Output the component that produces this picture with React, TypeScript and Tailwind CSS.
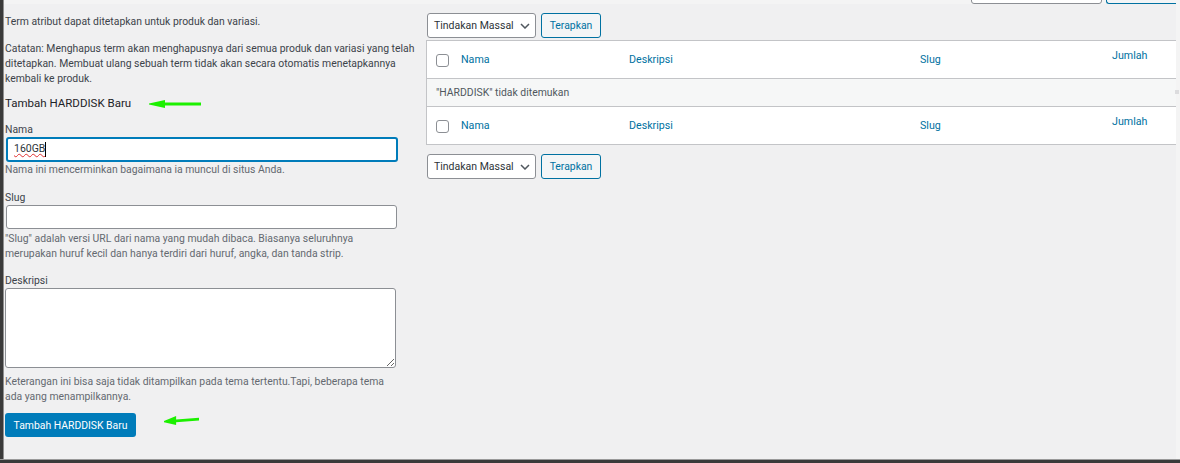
const font = "[font-family:'Roboto','Noto_Sans',sans-serif]";

const Help = ({ children }: { children: React.ReactNode }) => (
  <p className="max-w-[392px] text-[10.4px] leading-[15px] text-[#646970]">{children}</p>
);

const BulkActions = () => (
  <div className="flex items-center gap-[5px]">
    <div className="flex h-[25px] w-[109px] items-center justify-between whitespace-nowrap rounded-[3px] border border-[#8c8f94] bg-white pl-[6px] pr-[5px] text-[10.5px] text-[#2c3338]">
      <span>Tindakan Massal</span>
      <svg width="10" height="6" viewBox="0 0 10 6" fill="none" stroke="#50575e" strokeWidth="1.5">
        <path d="M1 1l4 4 4-4" />
      </svg>
    </div>
    <div className="flex h-[25px] w-[60px] items-center justify-center rounded-[3px] border border-[#0071a1] bg-[#f3f5f6] pt-px text-[10.4px] text-[#0071a1]">
      Terapkan
    </div>
  </div>
);

const HeaderRow = () => (
  <div className="grid h-[37px] grid-cols-[34px_168px_291px_192px_1fr] bg-white pt-[2px] text-[10.7px] text-[#0071a1]">
    <div className="flex items-center pl-[9px]">
      <span className="h-[13px] w-[13px] rounded-[3px] border border-[#8c8f94] bg-white" />
    </div>
    <div className="flex items-center">Nama</div>
    <div className="flex items-center">Deskripsi</div>
    <div className="flex items-center">Slug</div>
    <div className="pt-[5px]">Jumlah</div>
  </div>
);

const Arrow = ({ className, slanted }: { className: string; slanted?: boolean }) => (
  <svg className={className} viewBox="0 0 52 8" preserveAspectRatio="none" fill="#1cf000">
    {slanted ? <path d="M0 4.5V5.5L18 8V5.5L52 4V1.5L18 3V0Z" /> : <path d="M0 3.4V4.6L16 8V5.5H52V2.5H16V0Z" />}
  </svg>
);

export default function App() {
  return (
    <div className={`${font} flex h-[463px] w-[1180px] flex-col overflow-hidden bg-[#f0f0f1]`}>
      <div className="flex min-h-0 flex-1">
        <div className="w-[4px] shrink-0 border-r border-[#8f8f8f] bg-[#3a3a3a]" />
        <div className="min-w-0 flex-1">
          {/* tombol atas yang terpotong */}
          <div className="flex h-[4px] items-end justify-end gap-[4px] overflow-hidden bg-[#f4f4f4]">
            <div className="h-[20px] w-[131px] shrink-0 rounded-[3px] border border-[#8c8f94] bg-white" />
            <div className="h-[20px] w-[70px] shrink-0 rounded-l-[3px] border border-r-0 border-[#0071a1] bg-[#f3f5f6]" />
          </div>

          <div className="flex">
            {/* kolom kiri */}
            <div className="relative w-[415px] shrink-0 pl-[1px] pt-[10px] text-[#3c434a]">
              <p className="text-[10.4px] leading-[15px]">Term atribut dapat ditetapkan untuk produk dan variasi.</p>
              <p className="mt-[12px] text-[10.4px] leading-[15px]">
                Catatan: Menghapus term akan menghapusnya dari semua produk dan variasi yang telah ditetapkan. Membuat ulang sebuah term tidak akan secara otomatis menetapkannya kembali ke produk.
              </p>
              <h2 className="mt-[9px] text-[11.5px] font-normal leading-[16px] text-[#1d2327]">Tambah HARDDISK Baru</h2>
              <Arrow className="absolute left-[145px] top-[96px] h-[8px] w-[52px]" />

              <label className="mt-[11px] block text-[10.4px] leading-[15px]">Nama</label>
              <div className="ml-[1px] flex h-[25px] w-[392px] items-center rounded-[3px] border-2 border-[#007cba] bg-white pb-px pl-[6px] text-[10.5px] text-[#2c3338]">
                <span className="underline decoration-[#e03131] decoration-wavy decoration-[1px]">160GB</span>
                <span className="h-[15px] w-px bg-black" />
              </div>
              <Help>Nama ini mencerminkan bagaimana ia muncul di situs Anda.</Help>

              <label className="mt-[13px] block text-[10.4px] leading-[15px]">Slug</label>
              <div className="ml-[1px] h-[24px] w-[391px] rounded-[3px] border border-[#8c8f94] bg-white" />
              <div className="mt-[2px]">
                <Help>
                  "Slug" adalah versi URL dari nama yang mudah dibaca. Biasanya seluruhnya merupakan huruf kecil dan hanya terdiri dari huruf, angka, dan tanda strip.
                </Help>
              </div>

              <label className="mt-[12px] block text-[10.4px] leading-[15px]">Deskripsi</label>
              <textarea
                readOnly
                className="block h-[80px] w-[391px] rounded-[3px] border border-[#8c8f94] bg-white"
              />
              <div className="mt-[6px]">
                <Help>Keterangan ini bisa saja tidak ditampilkan pada tema tertentu.Tapi, beberapa tema ada yang menampilkannya.</Help>
              </div>

              <div className="mt-[9px] flex h-[24px] w-[131px] items-center justify-center rounded-[3px] bg-[#007cba] pt-px text-[10.4px] text-white">
                Tambah HARDDISK Baru
              </div>
              <Arrow slanted className="absolute left-[160px] top-[412px] h-[9px] w-[35px]" />
            </div>

            {/* kolom kanan */}
            <div className="ml-[8px] min-w-0 flex-1 pt-[9px]">
              <BulkActions />
              <div className="-ml-px mt-[2px] border-y border-l border-[#c3c4c7] bg-white">
                <HeaderRow />
                <div className="relative flex h-[29px] items-center border-y border-[#c3c4c7] bg-[#f6f7f7] pl-[9px] text-[10.4px] text-[#50575e]">
                  "HARDDISK" tidak ditemukan
                  <span className="absolute -right-[3px] top-[11px] h-[4px] w-[4px] bg-[#dcdcde]" />
                </div>
                <HeaderRow />
              </div>
              <div className="mt-[9px]">
                <BulkActions />
              </div>
            </div>
          </div>
        </div>
        <div className="w-[4px] shrink-0 bg-[#f4f4f4]" />
      </div>
      <div className="h-[4px] shrink-0 border-t border-[#9a9a9a] bg-[#3a3a3a]" />
    </div>
  );
}
